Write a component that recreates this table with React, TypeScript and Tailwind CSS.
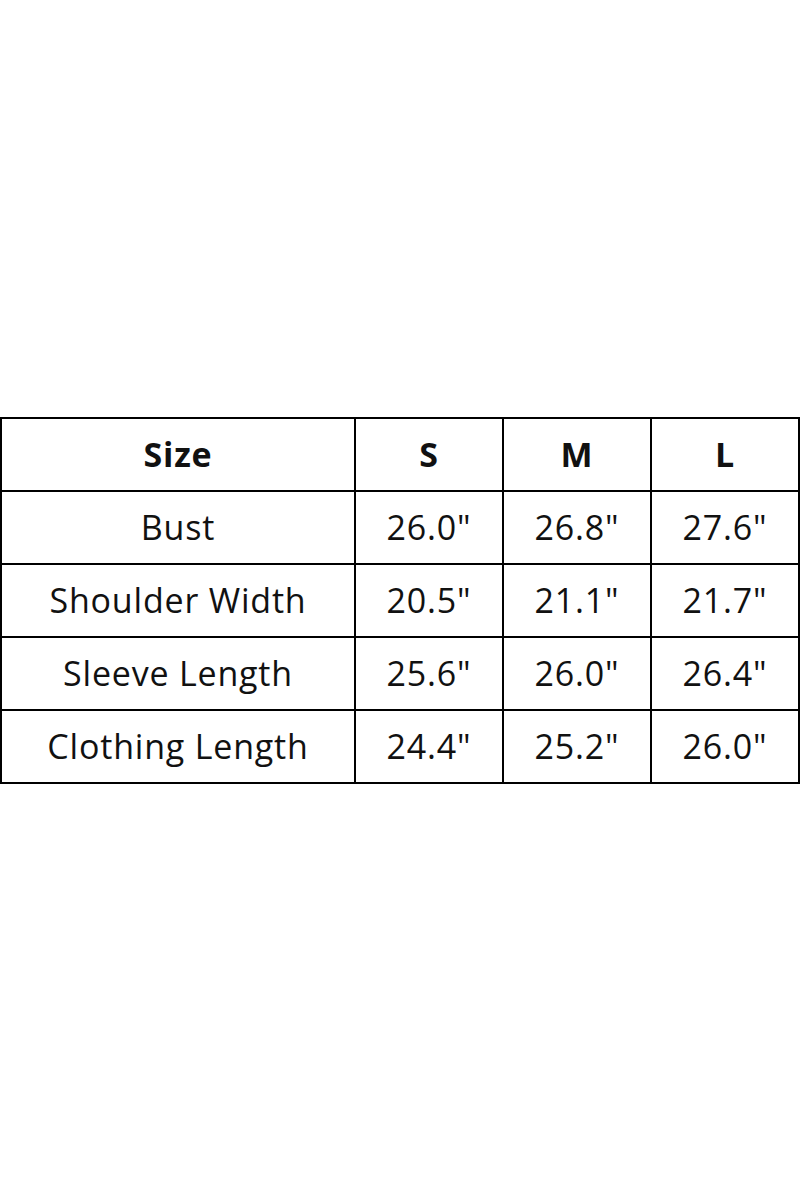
const rows = [
  ['Bust', '26.0"', '26.8"', '27.6"'],
  ['Shoulder Width', '20.5"', '21.1"', '21.7"'],
  ['Sleeve Length', '25.6"', '26.0"', '26.4"'],
  ['Clothing Length', '24.4"', '25.2"', '26.0"'],
]

export default function App() {
  return (
    <div className="flex h-[1200px] w-[800px] items-center bg-white" style={{ fontFamily: '"Open Sans", "Noto Sans", sans-serif' }}>
      <table className="w-[800px] table-fixed border-collapse text-[34px] leading-none tracking-[0.8px] text-[#111]">
        <colgroup>
          <col className="w-[354px]" />
          <col className="w-[148px]" />
          <col className="w-[148px]" />
          <col className="w-[148px]" />
        </colgroup>
        <thead>
          <tr className="h-[73px]">
            {['Size', 'S', 'M', 'L'].map((h) => (
              <th key={h} className="border-2 border-black p-0 text-center font-bold">
                {h}
              </th>
            ))}
          </tr>
        </thead>
        <tbody>
          {rows.map((r) => (
            <tr key={r[0]} className="h-[73px]">
              {r.map((c, i) => (
                <td key={i} className="border-2 border-black p-0 text-center font-normal">
                  {c}
                </td>
              ))}
            </tr>
          ))}
        </tbody>
      </table>
    </div>
  )
}
